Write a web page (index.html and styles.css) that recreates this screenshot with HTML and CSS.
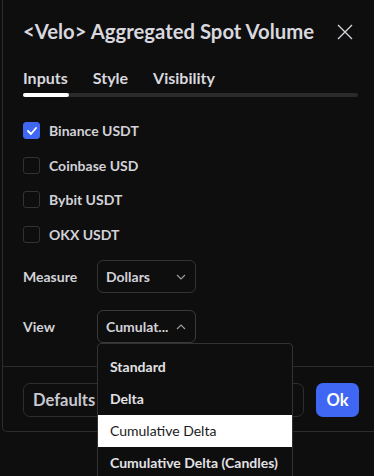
FILE: index.html
```html
<!DOCTYPE html>
<html lang="en">
  <head>
    <meta charset="UTF-8" />
    <meta name="viewport" content="width=device-width, initial-scale=1.0" />
    <title>Indicator Settings</title>
    <link rel="stylesheet" href="styles.css">
  </head>
  <body>
    <div class="dialog">
      <div class="header">
        <h2 class="title">&lt;Velo&gt; Aggregated Spot Volume</h2>
        <svg class="close" width="16" height="16" viewBox="0 0 16 16">
          <path d="M1 1 L15 15 M15 1 L1 15" stroke="#d8d8dc" stroke-width="1.3" fill="none" />
        </svg>
      </div>

      <div class="tabs">
        <span class="tab active">Inputs</span>
        <span class="tab">Style</span>
        <span class="tab">Visibility</span>
      </div>
      <div class="track"><div class="track-active"></div></div>

      <div class="inputs">
        <label class="check-row">
          <span class="box checked">
            <svg width="10" height="8" viewBox="0 0 10 8">
              <path d="M1 4 L4 7 L9 1" stroke="#fff" stroke-width="1.8" fill="none" stroke-linecap="round" stroke-linejoin="round" />
            </svg>
          </span>
          Binance USDT
        </label>
        <label class="check-row"><span class="box"></span>Coinbase USD</label>
        <label class="check-row"><span class="box"></span>Bybit USDT</label>
        <label class="check-row"><span class="box"></span>OKX USDT</label>

        <div class="field">
          <span class="field-label">Measure</span>
          <div class="select">
            <span>Dollars</span>
            <svg width="10" height="6" viewBox="0 0 10 6">
              <path d="M1 1 L5 5 L9 1" stroke="#9a9aa0" stroke-width="1.2" fill="none" />
            </svg>
          </div>
        </div>

        <div class="field">
          <span class="field-label">View</span>
          <div class="select open">
            <span>Cumulat...</span>
            <svg width="10" height="6" viewBox="0 0 10 6">
              <path d="M1 5 L5 1 L9 5" stroke="#9a9aa0" stroke-width="1.2" fill="none" />
            </svg>
            <ul class="menu">
              <li>Standard</li>
              <li>Delta</li>
              <li class="hover">Cumulative Delta</li>
              <li>Cumulative Delta (Candles)</li>
            </ul>
          </div>
        </div>
      </div>

      <div class="footer">
        <button class="btn defaults">Defaults</button>
        <button class="btn ok">Ok</button>
      </div>
    </div>
  </body>
</html>
```

FILE: styles.css
```css
html, body {
  margin: 0;
  height: 100%;
  overflow: hidden;
}
body {
  font-family: Lato, "Noto Sans", sans-serif;
  background-color: #0e0e0e;
  color: #d6d6dc;
}
.dialog {
  width: 420px;
  margin-left: 2px;
  height: 432px;
  box-sizing: border-box;
  background-color: #0e0e0e;
  border-left: 1px solid #2c2c2e;
  border-bottom: 1px solid #2c2c2e;
  border-bottom-left-radius: 5px;
  display: flex;
  flex-direction: column;
}
.header {
  display: flex;
  align-items: center;
  width: 330px;
  padding: 17px 0 0 20px;
  height: 28px;
}
.title {
  margin: 0;
  font-size: 20.3px;
  font-weight: 700;
  color: #d8d8de;
  flex: 1;
  white-space: nowrap;
}
.close {
  margin-top: 1px;
}
.tabs {
  display: flex;
  gap: 25px;
  padding: 18px 0 0 20px;
  height: 28px;
  align-items: center;
}
.tab {
  font-size: 16px;
  font-weight: 700;
  color: #d8d8de;
}
.track {
  margin: 2px 0 0 20px;
  width: 335px;
  height: 4px;
  border-radius: 2px;
  background-color: #2a2a2c;
}
.track-active {
  width: 46px;
  height: 4px;
  border-radius: 2px;
  background-color: #fff;
}
.inputs {
  padding: 25px 0 0 20px;
  flex: 1;
}
.check-row {
  display: flex;
  align-items: center;
  gap: 9px;
  height: 17px;
  margin-bottom: 17.6px;
  font-size: 14px;
  font-weight: 700;
  color: #d2d2d8;
}
.box {
  width: 15px;
  height: 15px;
  border: 1px solid #333336;
  border-radius: 3px;
  display: flex;
  align-items: center;
  justify-content: center;
}
.box.checked {
  background-color: #3f67f3;
  border-color: #3f67f3;
}
.field {
  display: flex;
  align-items: center;
  height: 33px;
  margin-bottom: 17px;
}
.inputs .field:nth-of-type(1) {
  margin-top: 5px;
}
.field-label {
  width: 74px;
  font-size: 14px;
  font-weight: 700;
  color: #d2d2d8;
}
.select {
  position: relative;
  width: 99px;
  height: 33px;
  box-sizing: border-box;
  border: 1px solid #333336;
  border-radius: 6px;
  display: flex;
  align-items: center;
  justify-content: space-between;
  padding: 0 9px 0 8px;
  font-size: 14px;
  font-weight: 700;
  color: #d2d2d8;
}
.select.open {
  border-color: #3a3a3d;
}
.menu {
  position: absolute;
  top: 32px;
  left: -1px;
  width: 196px;
  height: 200px;
  box-sizing: border-box;
  margin: 0;
  padding: 7px 0 0;
  list-style: none;
  background-color: #0e0e0e;
  border: 1px solid #333336;
  border-radius: 4px 4px 0 0;
  z-index: 2;
}
.menu li {
  height: 32px;
  line-height: 32px;
  padding-left: 12px;
  font-size: 14px;
  font-weight: 700;
  color: #e2e2e6;
  white-space: nowrap;
}
.menu li.hover {
  background-color: #fff;
  color: #1a1a1a;
  font-weight: 400;
}
.footer {
  border-top: 1px solid #2a2a2c;
  display: flex;
  gap: 12px;
  padding: 16px 0 0 20px;
  height: 48px;
}
.btn {
  font-family: inherit;
  font-size: 16.5px;
  font-weight: 700;
  height: 34px;
  border-radius: 7px;
  cursor: pointer;
}
.defaults {
  width: 281px;
  text-align: left;
  padding-left: 9px;
  background-color: transparent;
  border: 1px solid #2e2e30;
  color: #c8c8ce;
}
.ok {
  width: 43px;
  background-color: #3f67f3;
  border: none;
  color: #fff;
}
```
